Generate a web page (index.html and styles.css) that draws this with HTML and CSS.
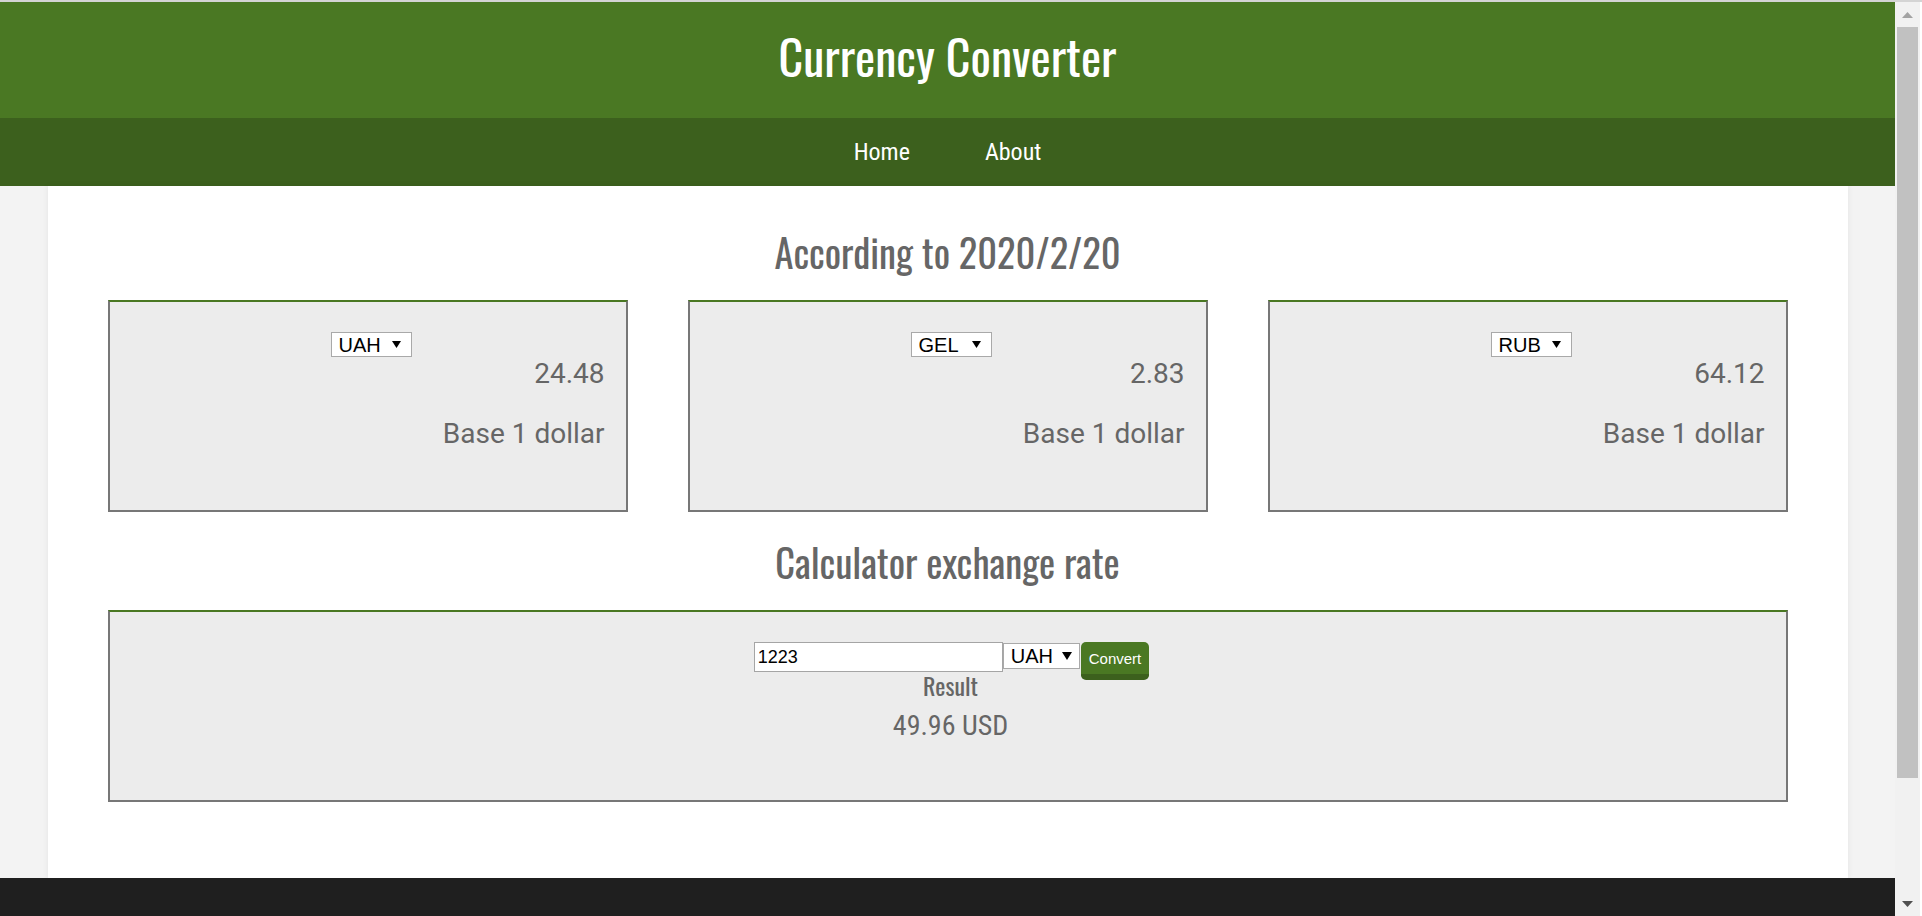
FILE: index.html
```html
<!DOCTYPE html>
<html lang="en">
<head>
<meta charset="utf-8">
<title>Currency Converter</title>
<link rel="stylesheet" href="styles.css">
</head>
<body>
<header class="site-header">
  <h1 class="title">Currency Converter</h1>
</header>
<nav class="nav">
  <a href="#" class="nav-link">Home</a>
  <a href="#" class="nav-link">About</a>
</nav>
<main class="container">
  <h2 class="heading">According to 2020/2/20</h2>
  <div class="cards">
    <div class="card">
      <div class="card-select"><select class="cur cur-sm"><option>UAH</option></select></div>
      <p class="rate">24.48</p>
      <p class="base">Base 1 dollar</p>
    </div>
    <div class="card">
      <div class="card-select"><select class="cur cur-sm"><option>GEL</option></select></div>
      <p class="rate">2.83</p>
      <p class="base">Base 1 dollar</p>
    </div>
    <div class="card">
      <div class="card-select"><select class="cur cur-sm"><option>RUB</option></select></div>
      <p class="rate">64.12</p>
      <p class="base">Base 1 dollar</p>
    </div>
  </div>
  <h2 class="heading heading-calc">Calculator exchange rate</h2>
  <div class="calc">
    <div class="calc-row">
      <input class="amount" type="text" value="1223">
      <select class="cur cur-lg"><option>UAH</option></select>
      <button class="convert" type="button">Convert</button>
    </div>
    <p class="result-label">Result</p>
    <p class="result">49.96 USD</p>
  </div>
</main>
<footer class="footer"></footer>
<div class="scrollbar">
  <div class="sb-btn"><svg width="11" height="6" viewBox="0 0 11 6"><polygon points="0,6 11,6 5.5,0" fill="#a3a3a3"/></svg></div>
  <div class="sb-thumb"></div>
  <div class="sb-track"></div>
  <div class="sb-btn"><svg width="11" height="6" viewBox="0 0 11 6"><polygon points="0,0 11,0 5.5,6" fill="#505050"/></svg></div>
</div>
</body>
</html>
```
FILE: styles.css
```css
html, body {
  margin: 0;
  overflow: hidden;
}
body {
  background: #f3f3f3;
  border-top: 2px solid #d4d4d4;
  padding-right: 27px;
  font-family: Roboto, "Liberation Sans", sans-serif;
  height: 914px;
}
.site-header {
  background: #4a7823;
  height: 116px;
  box-sizing: border-box;
  padding-bottom: 9px;
  display: flex;
  align-items: center;
  justify-content: center;
}
.title {
  margin: 0;
  font-family: "Oswald", "Liberation Sans Narrow", "DejaVu Sans Condensed", sans-serif;
  font-weight: normal;
  font-size: 48px;
  line-height: 60px;
  color: #fff;
}
.nav {
  background: #3c601d;
  height: 68px;
  display: flex;
  justify-content: center;
  gap: 75px;
}
.nav-link {
  font-family: "Roboto Condensed", Roboto, sans-serif;
  font-size: 24px;
  line-height: 68px;
  color: #fff;
  text-decoration: none;
}
.container {
  width: 1800px;
  height: 692px;
  margin: 0 auto;
  padding: 0 60px;
  box-sizing: border-box;
  background: #fff;
  box-shadow: 0 0 6px rgba(0, 0, 0, 0.07);
  display: flow-root;
}
.heading {
  text-align: center;
  font-family: "Oswald", "Liberation Sans Narrow", "DejaVu Sans Condensed", sans-serif;
  font-weight: normal;
  font-size: 38.5px;
  line-height: 44px;
  color: #666;
  margin: 44px 0 26px;
}
.heading-calc {
  margin-top: 28px;
}
.cards {
  display: grid;
  grid-template-columns: repeat(3, 1fr);
  gap: 60px;
}
.card {
  background: #ececec;
  border: 2px solid #777;
  border-top-color: #4a7823;
  padding: 30px 21px 60px 24px;
}
.card-select {
  text-align: center;
  padding-left: 4px;
  height: 25px;
}
.cur {
  -webkit-appearance: none;
  appearance: none;
  display: inline-block;
  vertical-align: top;
  box-sizing: border-box;
  margin: 0;
  border: 1px solid #a9a9a9;
  border-radius: 0;
  background-color: #fff;
  background-image: url("data:image/svg+xml,%3Csvg xmlns='http://www.w3.org/2000/svg' viewBox='0 0 10 10'%3E%3Cpolygon points='0,1 10,1 5,9' fill='%23000'/%3E%3C/svg%3E");
  background-repeat: no-repeat;
  font-family: "Liberation Sans", Arial, sans-serif;
  color: #000;
  padding: 0 0 0 7px;
  outline: none;
}
.cur-sm {
  width: 81px;
  height: 25px;
  font-size: 20px;
  background-size: 9px 9px;
  background-position: right 10px center;
}
.cur-lg {
  width: 77px;
  height: 26px;
  font-size: 20px;
  margin-top: 1px;
  background-size: 10px 10px;
  background-position: right 7px center;
}
.rate,
.base {
  margin: 0;
  text-align: right;
  font-family: Roboto, sans-serif;
  font-size: 28px;
  line-height: 32px;
  color: #666;
}
.rate {
  margin-top: 1px;
}
.base {
  margin-top: 28px;
}
.calc {
  background: #ececec;
  border: 2px solid #777;
  border-top-color: #4a7823;
  padding: 30px 0 58px;
}
.calc-row {
  display: flex;
  justify-content: center;
  align-items: flex-start;
  height: 30px;
  padding-left: 8px;
}
.amount {
  width: 249px;
  height: 30px;
  box-sizing: border-box;
  margin: 0;
  border: 1px solid #a5a5a5;
  padding: 0 0 0 3px;
  font-family: "Liberation Sans", Arial, sans-serif;
  font-size: 18px;
  color: #000;
  background: #fff;
  outline: none;
}
.convert {
  height: 38px;
  box-sizing: border-box;
  margin: 0 0 0 1px;
  border: 0;
  border-bottom: 6px solid #3c601d;
  border-radius: 5px;
  background: #4a7823;
  color: #fff;
  font-family: "Liberation Sans", Arial, sans-serif;
  font-size: 15px;
  padding: 0 8px;
}
.result-label {
  margin: -1px 0 0;
  padding-left: 6px;
  text-align: center;
  font-family: "Oswald", "Liberation Sans Narrow", "DejaVu Sans Condensed", sans-serif;
  font-size: 24px;
  line-height: 28px;
  color: #666;
}
.result {
  margin: 11px 0 0;
  padding-left: 6px;
  text-align: center;
  font-family: "Roboto Condensed", Roboto, sans-serif;
  font-size: 28px;
  line-height: 32px;
  color: #666;
}
.footer {
  background: #1f1f1f;
  height: 60px;
}
.scrollbar {
  position: fixed;
  top: 2px;
  right: 0;
  bottom: 0;
  width: 27px;
  box-sizing: border-box;
  border-right: 2px solid #fff;
  background: #f1f1f1;
  display: flex;
  flex-direction: column;
}
.sb-btn {
  height: 25px;
  display: flex;
  align-items: center;
  justify-content: center;
}
.sb-thumb {
  height: 751px;
  margin: 0 2px;
  background: #c1c1c1;
}
.sb-track {
  flex: 1;
}
```
